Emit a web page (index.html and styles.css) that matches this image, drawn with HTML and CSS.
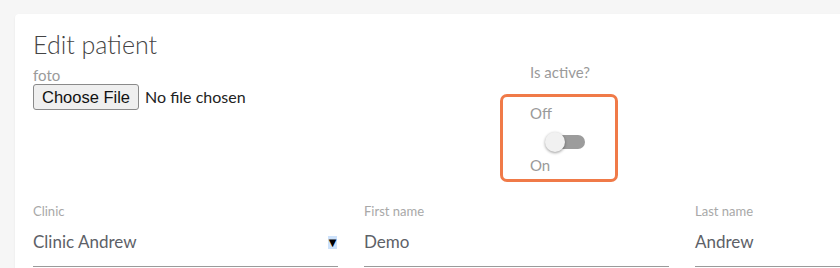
FILE: index.html
```html
<!DOCTYPE html>
<html lang="en">
<head>
    <meta charset="UTF-8">
    <meta name="viewport" content="width=device-width, initial-scale=1.0">
    <title>Edit patient</title>
    <link rel="stylesheet" href="styles.css">
</head>
<body>

    <div class="card">
        <h1 class="title">Edit patient</h1>

        <div class="top-row">
            <div class="photo">
                <div class="photo-label">foto</div>
                <input type="file" class="file-input" name="foto">
            </div>

            <div class="active">
                <div class="active-label">Is active?</div>
                <div class="switch-box">
                    <div class="switch-text">Off</div>
                    <label class="switch">
                        <input type="checkbox" name="active">
                        <span class="track"></span>
                        <span class="knob"></span>
                    </label>
                    <div class="switch-text switch-on">On</div>
                </div>
            </div>
        </div>

        <div class="fields">
            <div class="field">
                <div class="field-label">Clinic</div>
                <div class="field-input">
                    <span class="field-value">Clinic Andrew</span>
                    <span class="arrow">&#9660;</span>
                </div>
            </div>
            <div class="field">
                <div class="field-label">First name</div>
                <div class="field-input">
                    <span class="field-value">Demo</span>
                </div>
            </div>
            <div class="field">
                <div class="field-label">Last name</div>
                <div class="field-input">
                    <span class="field-value">Andrew</span>
                </div>
            </div>
        </div>
    </div>

</body>
</html>
```

FILE: styles.css
```css
html, body {
    overflow: hidden;
}
body {
    margin: 0;
    background-color: #f6f6f6;
    font-family: Lato, "Open Sans", sans-serif;
}
.card {
    margin: 14px 0 0 15px;
    width: 1004px;
    padding: 16px 18px 40px 18px;
    background-color: white;
    border-radius: 4px;
    box-shadow: 0 1px 2px rgba(0, 0, 0, 0.08);
}
.title {
    margin: 0;
    font-size: 25px;
    font-weight: 300;
    line-height: 29px;
    color: #444;
}
.top-row {
    display: grid;
    grid-template-columns: 467px auto;
}
.photo-label {
    margin-top: 8px;
    font-size: 15px;
    line-height: 17px;
    color: #9a9a9a;
}
.file-input {
    display: block;
    font-family: Lato, sans-serif;
    font-size: 16px;
    color: #222;
}
.file-input::file-selector-button {
    height: 26px;
    margin-right: 6px;
    padding: 0 8px;
    font-family: "Liberation Sans", Arial, sans-serif;
    font-size: 16.5px;
    color: #111;
    background-color: #efefef;
    border: 1px solid #8a8a8a;
    border-radius: 3px;
}
.active-label {
    margin: 4px 0 0 30px;
    font-size: 15px;
    line-height: 18px;
    color: #9a9a9a;
}
.switch-box {
    margin-top: 13px;
    padding: 7px 0 5px 27px;
    box-sizing: border-box;
    width: 118px;
    border: 3px solid #f07a48;
    border-radius: 7px;
}
.switch-text {
    font-size: 15px;
    line-height: 18px;
    color: #9a9a9a;
}
.switch-on {
    margin-top: 4px;
}
.switch {
    display: block;
    position: relative;
    margin: 10px 0 0 15px;
    width: 40px;
    height: 20px;
    cursor: pointer;
}
.switch input {
    display: none;
}
.track {
    position: absolute;
    left: 4px;
    top: 3px;
    width: 36px;
    height: 14px;
    border-radius: 7px;
    background-color: #9c9c9c;
}
.knob {
    position: absolute;
    left: 0;
    top: 0;
    width: 20px;
    height: 20px;
    border-radius: 50%;
    background-color: #f1f1f1;
    box-shadow: 0 1px 3px rgba(0, 0, 0, 0.4);
}
.fields {
    margin-top: 21px;
    display: grid;
    grid-template-columns: repeat(3, 305px);
    column-gap: 26px;
}
.field-label {
    font-size: 13px;
    line-height: 16px;
    color: #a8a8a8;
}
.field-input {
    display: flex;
    align-items: center;
    justify-content: space-between;
    margin-top: 11px;
    padding-bottom: 12px;
    border-bottom: 1px solid #9a9a9a;
}
.field-value {
    font-size: 17px;
    line-height: 24px;
    color: #5d6167;
}
.arrow {
    margin-right: 1px;
    width: 9px;
    height: 13px;
    font-family: "DejaVu Sans", sans-serif;
    font-size: 10px;
    line-height: 13px;
    text-align: center;
    color: #000;
    background-color: #cde2fb;
    overflow: hidden;
}
```
